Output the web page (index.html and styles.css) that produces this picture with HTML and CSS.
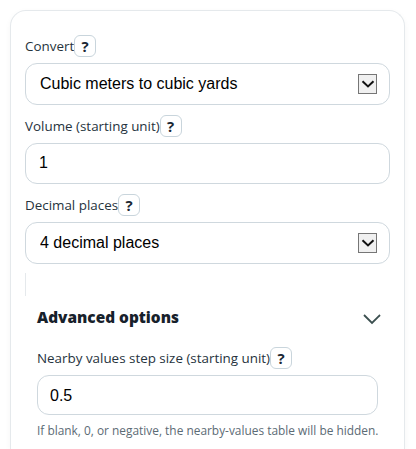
FILE: index.html
```html
<!DOCTYPE html>
<html lang="en">
<head>
<meta charset="utf-8">
<title>Volume converter</title>
<link rel="stylesheet" href="styles.css">
</head>
<body>
<main class="card">
  <div class="field">
    <div class="label-row"><label for="conv">Convert</label><button class="help" type="button">?</button></div>
    <div class="select-wrap">
      <select id="conv" class="control"><option>Cubic meters to cubic yards</option></select>
      <span class="arrow"><svg width="14" height="8" viewBox="0 0 14 8"><path d="M1.5 1.2 7 6.4l5.5-5.2" fill="none" stroke="#111" stroke-width="2"/></svg></span>
    </div>
  </div>
  <div class="field">
    <div class="label-row"><label for="vol">Volume (starting unit)</label><button class="help" type="button">?</button></div>
    <input id="vol" class="control text-input" value="1">
  </div>
  <div class="field">
    <div class="label-row"><label for="dec">Decimal places</label><button class="help" type="button">?</button></div>
    <div class="select-wrap">
      <select id="dec" class="control"><option>4 decimal places</option></select>
      <span class="arrow"><svg width="14" height="8" viewBox="0 0 14 8"><path d="M1.5 1.2 7 6.4l5.5-5.2" fill="none" stroke="#111" stroke-width="2"/></svg></span>
    </div>
  </div>
  <section class="advanced">
    <div class="adv-head">
      <h2>Advanced options</h2>
      <svg class="chev" width="18" height="11" viewBox="0 0 18 11"><path d="M1 1l8 8 8-8" fill="none" stroke="#3b4f4f" stroke-width="1.8"/></svg>
    </div>
    <div class="label-row"><label for="step">Nearby values step size (starting unit)</label><button class="help" type="button">?</button></div>
    <input id="step" class="control text-input small" value="0.5">
    <p class="hint">If blank, 0, or negative, the nearby-values table will be hidden.</p>
  </section>
</main>
</body>
</html>
```
FILE: styles.css
```css
* { box-sizing: border-box; }
html, body { margin: 0; height: 449px; overflow: hidden; background: #fff; }
body { padding: 10px 11px 0 10px; font-family: "Open Sans", "Noto Sans", sans-serif; }
.card {
  height: 439px;
  border: 1px solid #e5e9ec;
  border-bottom: 0;
  border-radius: 16px 16px 0 0;
  padding: 24px 14px 0;
  box-shadow: 0 2px 6px rgba(0, 0, 0, 0.04);
  background: #fff;
}
.field { margin-bottom: 10px; }
.label-row { display: flex; align-items: center; height: 22px; margin-bottom: 6px; }
label { font-size: 13.4px; line-height: 22px; color: #26333d; }
.help {
  width: 22px; height: 22px; padding: 0;
  border: 1px solid #c9d5dc; border-radius: 6px; background: #fff;
  font: 700 15px/20px "Open Sans", sans-serif; color: #1b2733;
}
.select-wrap { position: relative; }
.control {
  display: block; width: 100%; height: 42px;
  border: 1px solid #cfd8de; border-radius: 12px; background: #fff;
  font: 16px "Liberation Sans", Arial, sans-serif; color: #000;
  outline: none;
}
select.control { appearance: none; padding: 0 40px 2px 14px; }
.text-input { padding: 0 12px 1px 13px; height: 41px; }
.arrow {
  position: absolute; right: 13px; top: 11px;
  width: 19px; height: 20px;
  display: flex; align-items: center; justify-content: center;
  background: #f0f0f0; border: 1px solid #767676;
}
.advanced { margin: -1px 0 0; padding: 0 12px; position: relative; }
.advanced::before {
  content: ""; position: absolute; left: 0; top: 0;
  width: 1px; height: 23px; background: #e5e9ec;
}
.adv-head { display: flex; justify-content: space-between; align-items: center; padding-top: 33px; margin-bottom: 18px; height: 56px; }
h2 { margin: 0; font-size: 15.4px; line-height: 22px; font-weight: 800; color: #17212b; }
.chev { margin-right: -3px; margin-top: 4px; }
.small { height: 40px; padding: 1px 12px 0; }
.hint { margin: 6px 0 0; font-size: 11.9px; line-height: 18px; color: #5c6b75; white-space: nowrap; }
```
